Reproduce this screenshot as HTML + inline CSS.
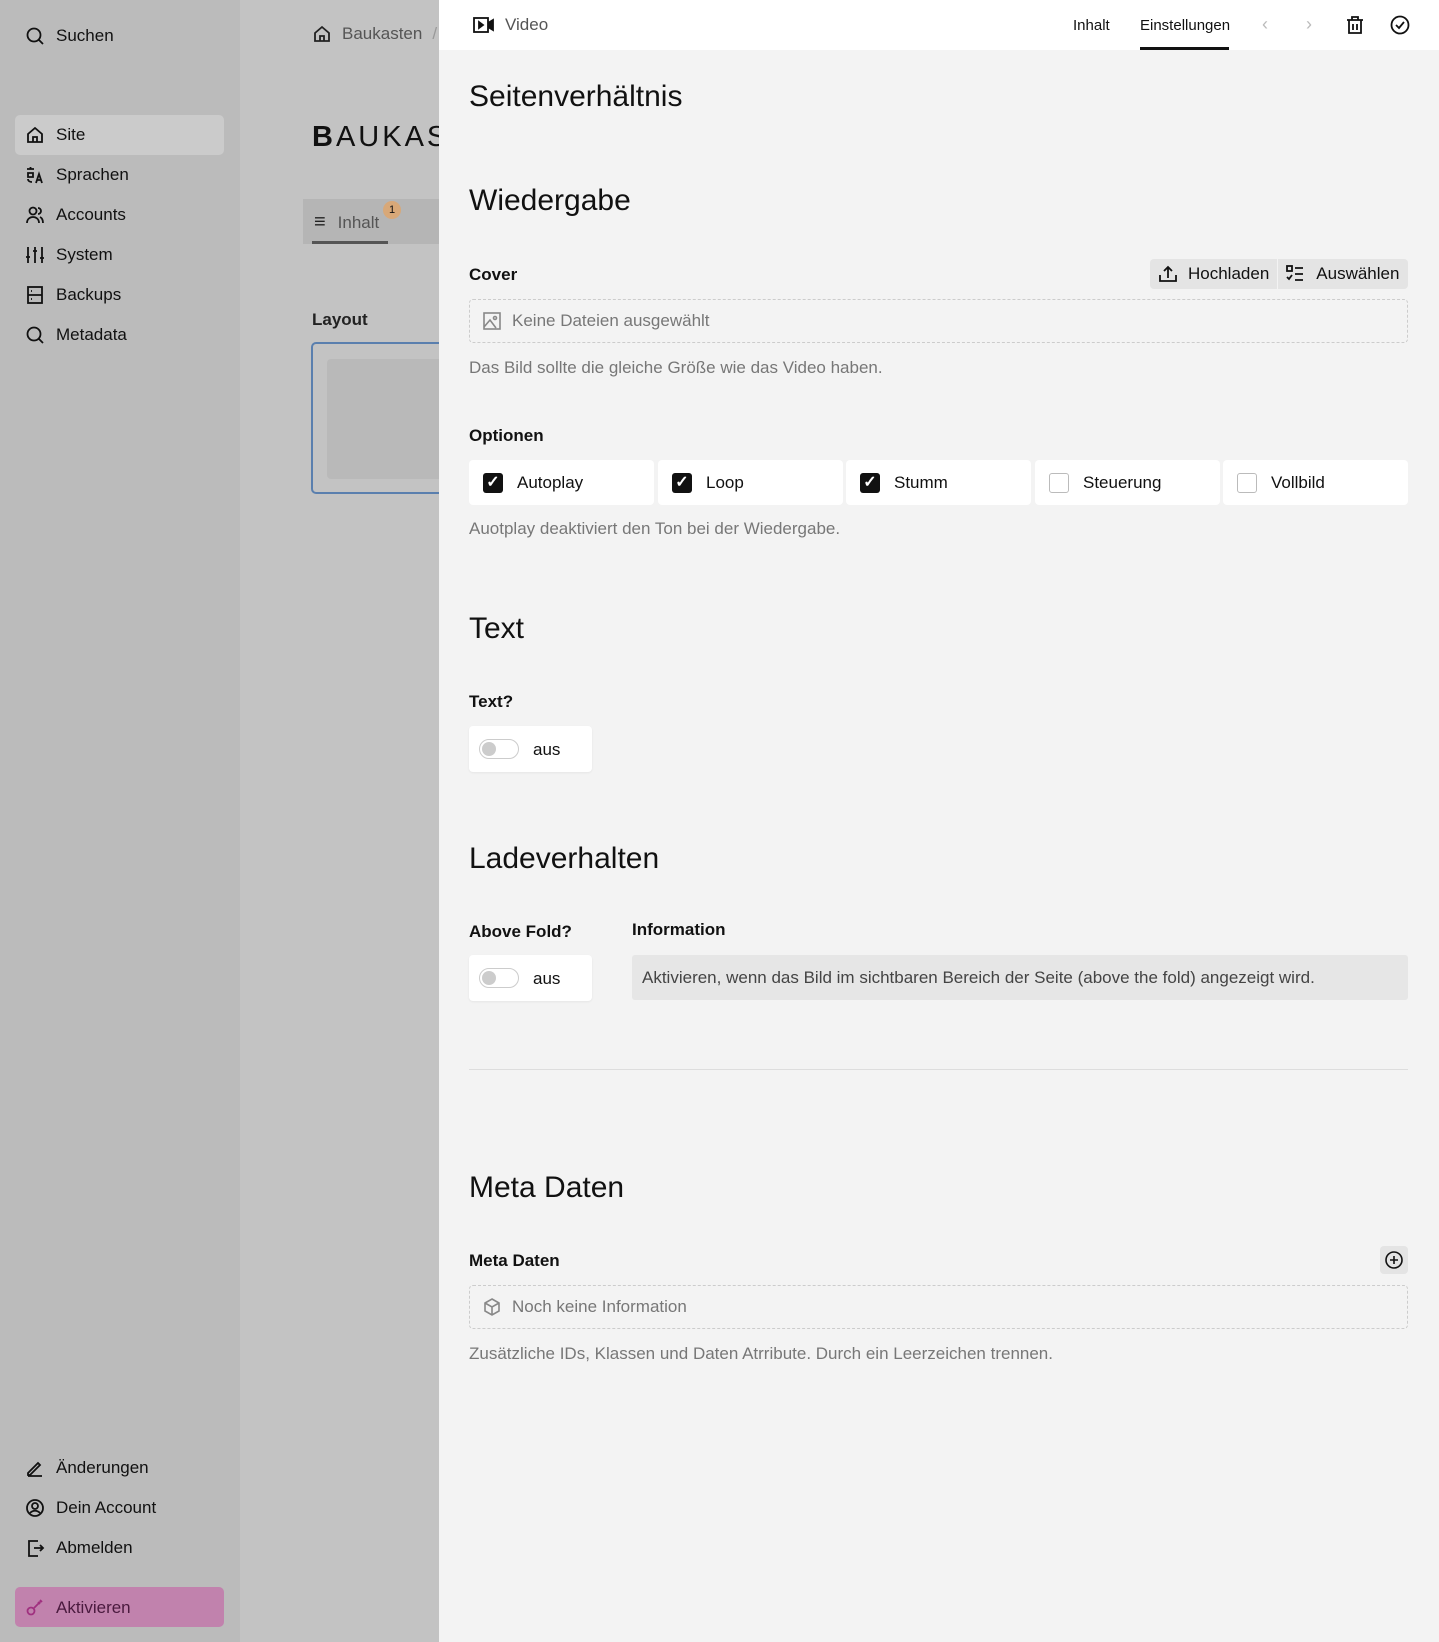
<!DOCTYPE html>
<html><head><meta charset="utf-8"><style>
*{box-sizing:border-box;margin:0;padding:0}
body{width:1439px;height:1642px;position:relative;overflow:hidden;font-family:"Liberation Sans",sans-serif;color:#111;background:#c3c3c3}
.a{position:absolute;white-space:nowrap}
.side{position:absolute;left:0;top:0;width:240px;height:1642px;background:#bbbbbb}
.si{position:absolute;left:25px;font-size:17px;display:flex;align-items:center;gap:11px;height:24px}
.si svg{width:20px;height:20px;fill:none;stroke:#111;stroke-width:1.8}
.panel{position:absolute;left:439px;top:0;width:1000px;height:1642px;background:#f3f3f3}
.hdr{position:absolute;left:0;top:0;width:1000px;height:50px;background:#fff}
.h2{font-size:30px;color:#111}
.lbl{font-size:17px;font-weight:bold}
.help{font-size:17px;color:#777}
.box{position:absolute;background:#fff;border-radius:4px;box-shadow:0 1px 2px rgba(0,0,0,.06)}
.cb{position:absolute;top:0;height:45px;width:185px;background:#fff;border-radius:4px;font-size:17px;display:flex;align-items:center;padding-left:14px;gap:14px}
.ck{width:20px;height:20px;background:#111;border-radius:3px;color:#fff;font-size:16px;line-height:20px;text-align:center;font-weight:bold}
.uk{width:20px;height:20px;border:1px solid #bbb;border-radius:3px;background:#fff}
.tg{position:absolute;left:10px;top:13px;width:40px;height:20px;border:1px solid #ccc;border-radius:10px;background:#fff}
.tg:after{content:"";position:absolute;left:2px;top:2px;width:14px;height:14px;border-radius:50%;background:#ccc}
.dz{position:absolute;left:30px;width:939px;height:44px;border:1px dashed #ccc;border-radius:4px;font-size:17px;color:#777;display:flex;align-items:center;padding-left:12px;gap:10px}
</style></head><body>
<div class="side">
<div class="si" style="top:24px"><svg viewBox="0 0 20 20"><circle cx="9" cy="9" r="6.5"/><path d="M14 14l4 4"/></svg>Suchen</div>
<div class="a" style="left:15px;top:115px;width:209px;height:40px;background:#cbcbcb;border-radius:5px"></div>
<div class="si" style="top:123px"><svg viewBox="0 0 20 20"><path d="M3 9l7-6 7 6v8H3z M8 17v-5h4v5"/></svg>Site</div>
<div class="si" style="top:163px"><svg viewBox="0 0 20 20"><path d="M2 4h7M5.5 2v2M3 8h5v4H3z M3 14c0 2 2 3 4 3M11 18l3-9 3 9M12 15h4"/></svg>Sprachen</div>
<div class="si" style="top:203px"><svg viewBox="0 0 20 20"><circle cx="8" cy="6" r="3.5"/><path d="M2 18c0-4 3-6 6-6s6 2 6 6M13 3a3 3 0 010 6M15 12c2 1 3 3 3 6"/></svg>Accounts</div>
<div class="si" style="top:243px"><svg viewBox="0 0 20 20"><path d="M3 2v16M10 2v16M17 2v16M1 12h4M8 6h4M15 13h4"/></svg>System</div>
<div class="si" style="top:283px"><svg viewBox="0 0 20 20"><rect x="3" y="2" width="14" height="16"/><path d="M3 10h14M6 6h1M6 14h1"/></svg>Backups</div>
<div class="si" style="top:323px"><svg viewBox="0 0 20 20"><circle cx="9" cy="9" r="6.5"/><path d="M14 14l4 4"/></svg>Metadata</div>
<div class="si" style="top:1456px"><svg viewBox="0 0 20 20"><path d="M3 15l10-10 2 2-10 10H3zM3 18h14"/></svg>Änderungen</div>
<div class="si" style="top:1496px"><svg viewBox="0 0 20 20"><circle cx="10" cy="10" r="8"/><circle cx="10" cy="8" r="3"/><path d="M5 15c3-3 7-3 10 0"/></svg>Dein Account</div>
<div class="si" style="top:1536px"><svg viewBox="0 0 20 20"><path d="M13 3H4v15h9M9 10h9M15 7l3 3-3 3"/></svg>Abmelden</div>
<div class="a" style="left:15px;top:1587px;width:209px;height:40px;background:#c182ad;border-radius:5px"></div>
<div class="si" style="top:1596px;color:#4a1a3e"><svg viewBox="0 0 20 20" style="stroke:#a0307f"><circle cx="6" cy="13" r="3.5"/><path d="M9 10l7-7M13 4l2 2M15 2l2 2"/></svg>Aktivieren</div>
</div>
<div class="a" style="left:312px;top:24px;font-size:17px;color:#555;display:flex;gap:10px;align-items:center"><svg width="20" height="20" viewBox="0 0 20 20" fill="none" stroke="#222" stroke-width="1.8"><path d="M3 9l7-6 7 6v8H3z M8 17v-5h4v5"/></svg>Baukasten <span style="color:#999">/</span></div>
<div class="a" style="left:312px;top:121px;font-size:29px;letter-spacing:3px;color:#111"><b style="font-weight:900">B</b>AUKAS</div>
<div class="a" style="left:303px;top:199px;width:140px;height:45px;background:#b5b5b5"></div>
<div class="a" style="left:312px;top:241px;width:76px;height:3px;background:#555"></div>
<div class="a" style="left:314px;top:211px;font-size:17px;color:#555;display:flex;gap:12px;align-items:center"><span style="font-size:20px;color:#222">≡</span>Inhalt</div>
<div class="a" style="left:383px;top:201px;width:18px;height:18px;border-radius:50%;background:#d8a878;font-size:11px;text-align:center;line-height:18px">1</div>
<div class="a lbl" style="left:312px;top:310px;color:#222">Layout</div>
<div class="a" style="left:311px;top:342px;width:140px;height:152px;border:2px solid #5a7fae;border-radius:5px"></div>
<div class="a" style="left:327px;top:359px;width:120px;height:120px;background:#b9b9b9;border-radius:4px"></div>

<div class="panel">
<div class="hdr">
<div class="a" style="left:34px;top:15px;font-size:17px;color:#555;display:flex;gap:10px;align-items:center"><svg width="22" height="18" viewBox="0 0 22 18" fill="none" stroke="#111" stroke-width="1.8"><rect x="1" y="2" width="14" height="14"/><path d="M15 7l5-3v10l-5-3M6 6v6l4-3z" fill="#111"/></svg>Video</div>
<div class="a" style="left:634px;top:17px;font-size:15px">Inhalt</div>
<div class="a" style="left:701px;top:17px;font-size:15px">Einstellungen</div>
<div class="a" style="left:701px;top:47px;width:89px;height:3px;background:#111"></div>
<div class="a" style="left:823px;top:14px;font-size:18px;color:#bbb">‹</div>
<div class="a" style="left:867px;top:14px;font-size:18px;color:#bbb">›</div>
<svg class="a" style="left:906px;top:15px" width="20" height="20" viewBox="0 0 20 20" fill="none" stroke="#111" stroke-width="1.8"><path d="M2 5h16M7 5V2h6v3M4 5v13h12V5M8 9v6M12 9v6"/></svg>
<svg class="a" style="left:951px;top:15px" width="20" height="20" viewBox="0 0 20 20" fill="none" stroke="#111" stroke-width="1.8"><circle cx="10" cy="10" r="8.5"/><path d="M6 10l3 3 5-6"/></svg>
</div>
<div class="a h2" style="left:30px;top:80px">Seitenverhältnis</div>
<div class="a h2" style="left:30px;top:184px">Wiedergabe</div>
<div class="a lbl" style="left:30px;top:265px">Cover</div>
<div class="a" style="left:711px;top:259px;width:258px;height:30px;background:#e4e4e4;border-radius:4px;font-size:17px;display:flex;align-items:center">
<span style="display:flex;align-items:center;gap:10px;padding:0 8px;border-right:1px solid #f3f3f3;height:30px"><svg width="20" height="18" viewBox="0 0 20 18" fill="none" stroke="#111" stroke-width="1.8"><path d="M2 10v6h16v-6M10 13V2M6 6l4-4 4 4"/></svg>Hochladen</span>
<span style="display:flex;align-items:center;gap:12px;padding:0 8px"><svg width="18" height="18" viewBox="0 0 18 18" fill="none" stroke="#111" stroke-width="1.8"><rect x="1" y="1" width="5" height="5"/><path d="M9 3h8M9 9h8M9 15h8M1 12l2 2 3-4"/></svg>Auswählen</span></div>
<div class="dz" style="top:299px"><svg width="20" height="20" viewBox="0 0 20 20" fill="none" stroke="#888" stroke-width="1.6"><rect x="2" y="2" width="16" height="16"/><circle cx="13" cy="7" r="1.5"/><path d="M2 16l6-7 6 8"/></svg>Keine Dateien ausgewählt</div>
<div class="a help" style="left:30px;top:358px">Das Bild sollte die gleiche Größe wie das Video haben.</div>
<div class="a lbl" style="left:30px;top:426px">Optionen</div>
<div class="a" style="left:30px;top:460px;width:939px;height:45px">
<div class="cb" style="left:0"><div class="ck">✓</div>Autoplay</div>
<div class="cb" style="left:189px"><div class="ck">✓</div>Loop</div>
<div class="cb" style="left:377px"><div class="ck">✓</div>Stumm</div>
<div class="cb" style="left:566px"><div class="uk"></div>Steuerung</div>
<div class="cb" style="left:754px"><div class="uk"></div>Vollbild</div>
</div>
<div class="a help" style="left:30px;top:519px">Auotplay deaktiviert den Ton bei der Wiedergabe.</div>
<div class="a h2" style="left:30px;top:612px">Text</div>
<div class="a lbl" style="left:30px;top:692px">Text?</div>
<div class="box" style="left:30px;top:726px;width:123px;height:46px"><div class="tg"></div><span class="a" style="left:64px;top:14px;font-size:17px">aus</span></div>
<div class="a h2" style="left:30px;top:842px">Ladeverhalten</div>
<div class="a lbl" style="left:30px;top:922px">Above Fold?</div>
<div class="a lbl" style="left:193px;top:920px">Information</div>
<div class="box" style="left:30px;top:955px;width:123px;height:46px"><div class="tg"></div><span class="a" style="left:64px;top:14px;font-size:17px">aus</span></div>
<div class="a" style="left:193px;top:955px;width:776px;height:45px;background:#e6e6e6;border-radius:3px;font-size:17px;color:#444;padding:13px 10px">Aktivieren, wenn das Bild im sichtbaren Bereich der Seite (above the fold) angezeigt wird.</div>
<div class="a" style="left:30px;top:1069px;width:939px;height:1px;background:#ddd"></div>
<div class="a h2" style="left:30px;top:1171px">Meta Daten</div>
<div class="a lbl" style="left:30px;top:1251px">Meta Daten</div>
<div class="a" style="left:941px;top:1246px;width:28px;height:28px;background:#e4e4e4;border-radius:4px"></div>
<svg class="a" style="left:946px;top:1251px" width="18" height="18" viewBox="0 0 18 18" fill="none" stroke="#111" stroke-width="1.6"><circle cx="9" cy="9" r="8"/><path d="M9 5v8M5 9h8"/></svg>
<div class="dz" style="top:1285px"><svg width="20" height="20" viewBox="0 0 20 20" fill="none" stroke="#888" stroke-width="1.6"><path d="M10 2l7 4v8l-7 4-7-4V6z M3 6l7 4 7-4M10 10v8"/></svg>Noch keine Information</div>
<div class="a help" style="left:30px;top:1344px">Zusätzliche IDs, Klassen und Daten Atrribute. Durch ein Leerzeichen trennen.</div>
</div>
</body></html>
